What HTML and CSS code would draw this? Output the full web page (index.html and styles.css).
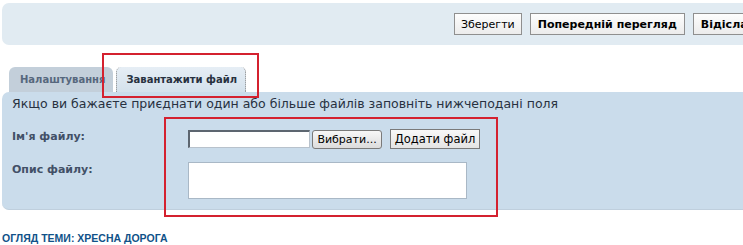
FILE: index.html
```html
<!DOCTYPE html>
<html lang="uk">
<head>
<meta charset="utf-8">
<title>Завантажити файл</title>
<link rel="stylesheet" href="styles.css">
</head>
<body>
<div class="page">
  <div class="topbar">
    <button class="btn">Зберегти</button>
    <button class="btn bold">Попередній перегляд</button>
    <button class="btn bold">Відіслати</button>
  </div>
  <div class="tabs">
    <div class="tab">Налаштування</div>
    <div class="tab active">Завантажити файл</div>
  </div>
  <div class="panel">
    <p class="intro">Якщо ви бажаєте приєднати один або більше файлів заповніть нижчеподані поля</p>
    <div class="row first">
      <label class="lbl">Ім'я файлу:</label>
      <div class="fields">
        <span class="fileinput"></span>
        <button class="browse">Вибрати...</button>
        <button class="add">Додати файл</button>
      </div>
    </div>
    <div class="row second">
      <label class="lbl">Опис файлу:</label>
      <div class="fields"><span class="textarea"></span></div>
    </div>
  </div>
  <a class="link" href="#">ОГЛЯД ТЕМИ: ХРЕСНА ДОРОГА</a>
  <div class="mark mark-tab"></div>
  <div class="mark mark-fields"></div>
</div>
</body>
</html>
```
FILE: styles.css
```css
html, body { margin: 0; padding: 0; background: #fff; overflow: hidden; }
.page { position: relative; width: 743px; height: 245px; overflow: hidden; font-family: "DejaVu Sans", Verdana, sans-serif; }
.topbar {
  margin: 3px 0 0 2px; height: 42px; width: 820px; background: #e1ebf2;
  border-radius: 7px 0 0 7px; display: flex; align-items: center;
  padding-left: 452px; gap: 8px; white-space: nowrap; box-sizing: border-box;
}
.btn {
  height: 22px; padding: 0 6px; border: 1px solid #8f8f8f; background: linear-gradient(#fdfdfd, #ececec);
  font-family: "DejaVu Sans", Verdana, sans-serif; font-size: 11px; color: #000; flex: none;
}
.btn.bold { font-weight: bold; padding: 0 7px; }
.tabs { display: flex; margin: 22px 0 0 9px; height: 25px; align-items: flex-end; gap: 3px; }
.tab {
  height: 25px; line-height: 25px; padding: 0 8px 0 11px; background: #c3cfda; border-radius: 6px 6px 0 0;
  font-size: 10px; font-weight: bold; color: #56677d; box-sizing: border-box;
}
.tab.active {
  background: linear-gradient(#e6eef5, #d4e1ec); color: #28313f; padding: 0 8px 0 9px;
  border-left: 1px dotted #888; border-right: 1px dotted #888; border-radius: 5px 5px 0 0;
}
.panel {
  margin-left: 2px; height: 118px; background: #cadceb; border-radius: 7px 0 0 7px;
  padding: 5px 0 0 10px; box-sizing: border-box; border-bottom: 1px solid #bfcfdd;
}
.intro { margin: 0; font-size: 12.5px; color: #28313f; line-height: 14px; }
.row { display: flex; }
.row.first { margin-top: 18px; }
.row.second { margin-top: 13px; }
.lbl { width: 176px; font-size: 11px; font-weight: bold; color: #425067; }
.fields { display: flex; align-items: center; }
.row.first .lbl { margin-top: 1px; }
.row.second .lbl { margin-top: 1px; }
.fileinput {
  width: 122px; height: 18px; background: #fff; box-sizing: border-box;
  border: 1px solid #b8c2cc; border-top: 2px solid #5d6670; border-left: 2px solid #5d6670;
}
.browse {
  margin-left: 2px; width: 70px; height: 19px; border: 1px solid #7a7a7a; border-radius: 3px;
  background: linear-gradient(#f7f7f7, #dcdcdc); font-family: "DejaVu Sans", sans-serif; font-size: 11px; padding: 0;
}
.add {
  margin-left: 8px; width: 90px; height: 20px; border: 1px solid #7a7a7a; background: linear-gradient(#f8f8f8, #e4e4e4);
  font-family: "DejaVu Sans", sans-serif; font-size: 11.5px; padding: 0;
}
.textarea { width: 279px; height: 37px; background: #fff; border: 1px solid #a9b8c6; box-sizing: border-box; }
.link {
  display: block; margin: 22px 0 0 2px; font-family: "Liberation Sans", Arial, sans-serif; font-size: 10.5px;
  font-weight: bold; color: #105289; text-decoration: none;
}
.mark { position: absolute; border: 2px solid #d4212f; box-sizing: border-box; }
.mark-tab { left: 102px; top: 53px; width: 157px; height: 45px; }
.mark-fields { left: 164px; top: 117px; width: 334px; height: 100px; }
```
